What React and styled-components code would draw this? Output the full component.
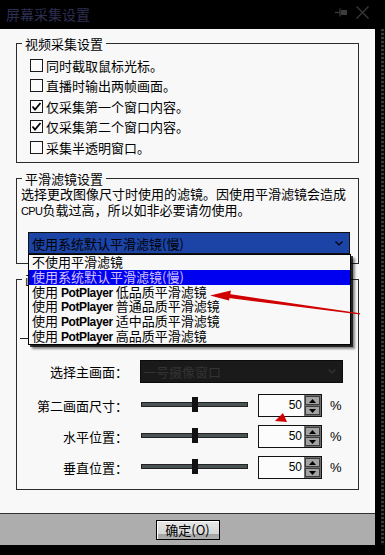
import React from "react";
import styled, { createGlobalStyle } from "styled-components";

const CJK = `"Noto Sans CJK SC", "Noto Sans CJK JP", sans-serif`;
const LATIN = `"Liberation Sans", "Noto Sans CJK SC", sans-serif`;

const GlobalStyle = createGlobalStyle`
  html, body { margin: 0; padding: 0; background: #000; }
  body { font-family: ${CJK}; }
  * { box-sizing: border-box; }
`;

const Window = styled.div`
  position: relative;
  width: 385px;
  height: 555px;
  background: #000;
  display: flex;
  flex-direction: column;
  overflow: hidden;
  font-family: ${CJK};
  font-size: 13px;
  color: #000;
`;

const TitleBar = styled.div`
  height: 29px;
  flex: none;
  display: flex;
  align-items: center;
  padding: 0 16px 0 6px;
`;

const Title = styled.div`
  flex: 1;
  font-size: 14px;
  line-height: 16px;
  color: #2e2e52;
  margin-top: -2px;
`;

const TitleButtons = styled.div`
  display: flex;
  align-items: center;
  gap: 8px;
  margin-top: -4px;
`;

const Body = styled.div`
  flex: 1;
  display: flex;
  min-height: 0;
`;

const Main = styled.div`
  width: 375px;
  flex: none;
  display: flex;
  flex-direction: column;
`;

const Client = styled.div`
  position: relative;
  flex: 1;
  background: #f8f8f8;
  padding: 7px 16px 0 16px;
  display: flex;
  flex-direction: column;
  gap: 8px;
`;

const Group = styled.fieldset`
  margin: 0;
  padding: 0;
  min-width: 0;
  border: 1px solid #2b2b2b;
`;

const Legend = styled.legend`
  margin-left: 5px;
  padding: 0 3px;
  font-size: 13px;
  line-height: 15px;
`;

const CheckList = styled.div`
  padding: 4px 0 4.5px 13px;
`;

const CheckRow = styled.label`
  height: 20.5px;
  display: flex;
  align-items: center;
  gap: 3px;
  line-height: 15px;
`;

const Box = styled.span`
  width: 13px;
  height: 13px;
  flex: none;
  border: 1px solid #1a1a1a;
  background: #fcfcfc;
  display: flex;
  align-items: center;
  justify-content: center;
`;

const FilterBody = styled.div`
  padding: 0 8px 9px 4px;
`;

const Desc = styled.div`
  line-height: 16px;
  white-space: nowrap;
`;

const Latin = styled.span`
  font-family: ${LATIN};
  font-size: ${(p) => p.$size || 11}px;
  letter-spacing: ${(p) => p.$ls || 0}px;
  font-weight: ${(p) => p.$weight || 400};
`;

const Combo = styled.div`
  margin: 13px 0 0 7px;
  width: 322px;
  height: 22px;
  background: #1c44a6;
  border: 1px solid #111;
  display: flex;
  align-items: center;
  padding: 0 6px 0 3px;
  line-height: 15px;
`;

const ComboText = styled.span`
  flex: 1;
  white-space: nowrap;
`;

const PipBody = styled.div`
  padding: 0 0 10px 0;
`;

const Hidden = styled.div`
  height: 73px;
  padding: 51px 0 0 3px;
`;

const Rule = styled.div`
  width: 300px;
  border-top: 1px solid #222;
`;

const FormGrid = styled.div`
  display: grid;
  grid-template-columns: 123px 118px 72px auto;
  grid-template-rows: 26px 23px 23px 23px;
  row-gap: 8px;
`;

const FieldLabel = styled.div`
  align-self: ${(p) => (p.$top ? "start" : "center")};
  height: ${(p) => (p.$top ? "23px" : "auto")};
  display: flex;
  align-items: center;
  justify-content: flex-end;
  padding-right: 12px;
  line-height: 15px;
  white-space: nowrap;
`;

const DisabledSelect = styled.div`
  grid-column: 2 / 5;
  align-self: start;
  width: 203px;
  height: 23px;
  background: #1a1a1a;
  border: 1px solid #0c0c0c;
  display: flex;
  align-items: center;
  padding: 0 6px 0 2px;
  color: #333;
  line-height: 15px;
`;

const SliderCell = styled.div`
  align-self: center;
  padding-left: 1px;
`;

const Track = styled.div`
  position: relative;
  width: 107px;
  height: 5px;
  background: #4a5353;
  border: 1px solid #222;
  margin-top: -3px;
`;

const Thumb = styled.div`
  position: absolute;
  top: -6px;
  width: 6px;
  height: 15px;
  background: #111;
`;

const Spin = styled.div`
  width: 64px;
  height: 23px;
  border: 1px solid #111;
  background: #fcfcfc;
  display: flex;
`;

const SpinValue = styled.div`
  flex: 1;
  text-align: right;
  padding-right: 2px;
  font-family: ${LATIN};
  font-size: 12px;
  line-height: 21px;
`;

const SpinButtons = styled.div`
  width: 17px;
  background: #6e6e6e;
  padding: 1px;
  display: flex;
  flex-direction: column;
  gap: 1px;
`;

const SpinBtn = styled.div`
  flex: 1;
  background: #a2a2a2;
  border: 1px solid #3c3c3c;
  display: flex;
  align-items: center;
  justify-content: center;
`;

const Unit = styled.div`
  align-self: center;
  font-family: ${LATIN};
  font-size: 13px;
  line-height: 15px;
`;

const DropList = styled.div`
  position: absolute;
  top: 225px;
  left: 28px;
  width: 323px;
  background: #f8f8f8;
  border: 1px solid #000;
  box-shadow: 2px 2px 0 rgba(0, 0, 0, 0.75), 4px 4px 2px rgba(0, 0, 0, 0.45);
`;

const DropItem = styled.div`
  height: 14.8px;
  line-height: 14.8px;
  padding-left: 3px;
  white-space: nowrap;
  background: ${(p) => (p.$selected ? "#0000f0" : "transparent")};
  color: ${(p) => (p.$selected ? "#d4c0ff" : "#000")};
`;

const Footer = styled.div`
  height: 32px;
  flex: none;
  background: #adadad;
  border-top: 1px solid #333;
  display: flex;
  align-items: center;
  justify-content: center;
`;

const OkButton = styled.button`
  width: 64px;
  height: 20px;
  padding: 0;
  border: 1px solid #000;
  background: linear-gradient(to bottom, #e8e8e8 0%, #d6d6d6 72%, #a2a2a2 72%, #b0b0b0 100%);
  box-shadow: inset 1px 1px 0 #fff;
  font-family: ${CJK};
  font-size: 13px;
  line-height: 16px;
  color: #000;
`;

const RightStrip = styled.div`
  width: 10px;
  flex: none;
  display: flex;
  padding: 0 1px 0 6px;
`;

const StripTexture = styled.div`
  flex: 1;
  background: repeating-linear-gradient(
    to bottom,
    #4a4a4a 0px,
    #4a4a4a 2px,
    #111 2px,
    #111 4px
  );
  opacity: 0.8;
`;

const BottomBlack = styled.div`
  height: 10px;
  flex: none;
`;

const Overlay = styled.svg`
  position: absolute;
  left: 0;
  top: 0;
  pointer-events: none;
`;

const Chevron = ({ color = "#000" }) => (
  <svg width="8" height="5" viewBox="0 0 8 5">
    <polyline points="0.5,0.5 4,4 7.5,0.5" fill="none" stroke={color} strokeWidth="1.2" />
  </svg>
);

const Check = () => (
  <svg width="11" height="11" viewBox="0 0 11 11">
    <polyline points="1.5,5.5 4,8.5 9.5,2" fill="none" stroke="#000" strokeWidth="1.8" />
  </svg>
);

const Tri = ({ up }) => (
  <svg width="7" height="4" viewBox="0 0 7 4">
    <polygon points={up ? "0,4 7,4 3.5,0" : "0,0 7,0 3.5,4"} fill="#000" />
  </svg>
);

const checks = [
  { label: "同时截取鼠标光标。", on: false },
  { label: "直播时输出两帧画面。", on: false },
  { label: "仅采集第一个窗口内容。", on: true },
  { label: "仅采集第二个窗口内容。", on: true },
  { label: "采集半透明窗口。", on: false },
];

const filters = [
  { pre: "不使用平滑滤镜" },
  { pre: "使用系统默认平滑滤镜(慢)", selected: true },
  { pre: "使用", pp: true, post: "低品质平滑滤镜" },
  { pre: "使用", pp: true, post: "普通品质平滑滤镜" },
  { pre: "使用", pp: true, post: "适中品质平滑滤镜" },
  { pre: "使用", pp: true, post: "高品质平滑滤镜" },
];

const sliders = [
  { label: "第二画面尺寸：", value: 50 },
  { label: "水平位置：", value: 50 },
  { label: "垂直位置：", value: 50 },
];

export default function App() {
  return (
    <>
      <GlobalStyle />
      <Window>
        <TitleBar>
          <Title>屏幕采集设置</Title>
          <TitleButtons>
            <svg width="13" height="9" viewBox="0 0 13 9">
              <line x1="0" y1="4.5" x2="5" y2="4.5" stroke="#3c3c3c" strokeWidth="1.2" />
              <line x1="5" y1="0.5" x2="5" y2="8.5" stroke="#3c3c3c" strokeWidth="1.2" />
              <rect x="6" y="2" width="6" height="5" fill="#3c3c3c" />
            </svg>
            <svg width="13" height="13" viewBox="0 0 13 13">
              <line x1="0.5" y1="0.5" x2="12.5" y2="12.5" stroke="#3a3a3a" strokeWidth="1.3" />
              <line x1="12.5" y1="0.5" x2="0.5" y2="12.5" stroke="#3a3a3a" strokeWidth="1.3" />
            </svg>
          </TitleButtons>
        </TitleBar>
        <Body>
          <Main>
            <Client>
              <Group>
                <Legend>视频采集设置</Legend>
                <CheckList>
                  {checks.map((c) => (
                    <CheckRow key={c.label}>
                      <Box>{c.on && <Check />}</Box>
                      <span>{c.label}</span>
                    </CheckRow>
                  ))}
                </CheckList>
              </Group>

              <Group>
                <Legend>平滑滤镜设置</Legend>
                <FilterBody>
                  <Desc>选择更改图像尺寸时使用的滤镜。因使用平滑滤镜会造成</Desc>
                  <Desc>
                    <Latin $size={11} $ls={-0.6}>CPU</Latin>负载过高，所以如非必要请勿使用。
                  </Desc>
                  <Combo>
                    <ComboText>使用系统默认平滑滤镜(慢)</ComboText>
                    <Chevron />
                  </Combo>
                </FilterBody>
              </Group>

              <Group>
                <Legend>画中画设置</Legend>
                <PipBody>
                  <Hidden>
                    <Rule />
                  </Hidden>
                  <FormGrid>
                    <FieldLabel $top>选择主画面：</FieldLabel>
                    <DisabledSelect>
                      <ComboText>一号摄像窗口</ComboText>
                      <Chevron color="#333" />
                    </DisabledSelect>
                    {sliders.map((s) => (
                      <React.Fragment key={s.label}>
                        <FieldLabel>{s.label}</FieldLabel>
                        <SliderCell>
                          <Track>
                            <Thumb style={{ left: `calc(${s.value}% - 3px)` }} />
                          </Track>
                        </SliderCell>
                        <Spin>
                          <SpinValue>{s.value}</SpinValue>
                          <SpinButtons>
                            <SpinBtn>
                              <Tri up />
                            </SpinBtn>
                            <SpinBtn>
                              <Tri />
                            </SpinBtn>
                          </SpinButtons>
                        </Spin>
                        <Unit>%</Unit>
                      </React.Fragment>
                    ))}
                  </FormGrid>
                </PipBody>
              </Group>

              <DropList>
                {filters.map((f, i) => (
                  <DropItem key={i} $selected={f.selected}>
                    {f.pre}
                    {f.pp && (
                      <>
                        {" "}
                        <Latin $size={12} $weight={700} $ls={-0.4}>PotPlayer</Latin>{" "}
                        {f.post}
                      </>
                    )}
                  </DropItem>
                ))}
              </DropList>
            </Client>
            <Footer>
              <OkButton>确定(O)</OkButton>
            </Footer>
          </Main>
          <RightStrip>
            <StripTexture />
          </RightStrip>
        </Body>
        <BottomBlack />

        <Overlay width="385" height="555" viewBox="0 0 385 555">
          <polygon points="229,294 229,298 360,314.5 360,313.3" fill="#d00000" />
          <polygon points="210,295.5 231,290.5 229,300.5" fill="#d00000" />
          <polygon points="275,421 283,413 287,422" fill="#d00000" />
        </Overlay>
      </Window>
    </>
  );
}
